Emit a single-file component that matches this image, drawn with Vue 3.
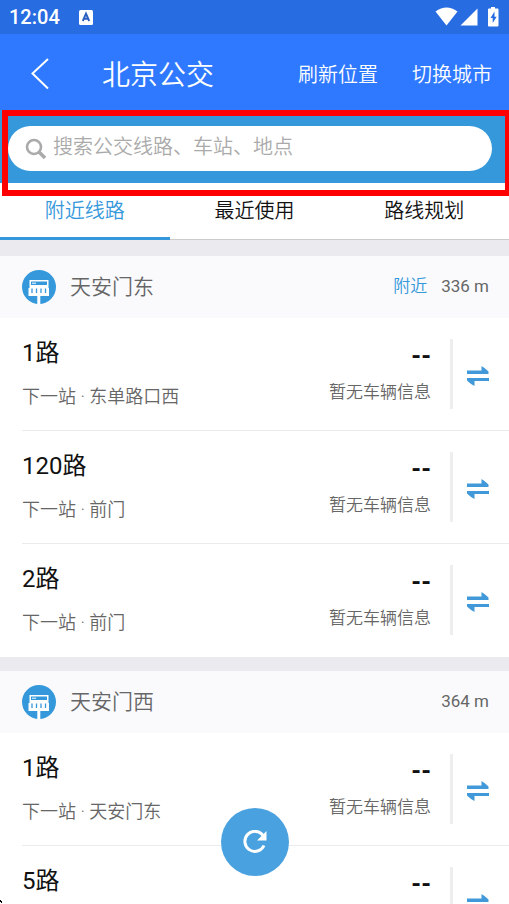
<script setup>
import { ref } from 'vue'

const keyword = ref('')
const activeTab = ref('附近线路')
const tabs = ['附近线路', '最近使用', '路线规划']

const stations = [
  {
    name: '天安门东',
    nearest: true,
    distance: '336 m',
    routes: [
      { name: '1路', next: '东单路口西' },
      { name: '120路', next: '前门' },
      { name: '2路', next: '前门' },
    ],
  },
  {
    name: '天安门西',
    nearest: false,
    distance: '364 m',
    routes: [
      { name: '1路', next: '天安门东' },
      { name: '5路', next: '前门' },
    ],
  },
]
</script>

<template>
  <div class="app">
    <div class="status">
      <span class="clock">12:04</span>
      <svg class="ime" viewBox="0 0 14 15" aria-hidden="true">
        <rect width="14" height="15" rx="1.5" fill="#fff" />
        <path d="M3.8 11 7 3.6 10.2 11M5 8.7h4" fill="none" stroke="#285fc0" stroke-width="1.9" />
      </svg>
      <svg class="signals" viewBox="0 0 66 20" aria-hidden="true">
        <g fill="#fff">
          <path d="M.5 4.5Q11.500-3.500 22.500 4.500L11.500 18.500Z" />
          <path d="M42.500 1.500V18.500H25.500Z" />
          <path d="M56 0h4v1.500h2.500q1 0 1 1V18.500q0 1-1 1H54q-1 0-1-1V2.500q0-1 1-1h2Z" />
        </g>
        <path d="M59.500 4.500 55.500 11h2.200V16l4-6.300h-2.200Z" fill="#286ce2" />
      </svg>
    </div>

    <header class="header">
      <button class="back" type="button" aria-label="返回">
        <svg viewBox="0 0 18 32" aria-hidden="true">
          <path d="M17 1 1.500 15.500 17 30.500" fill="none" stroke="#fff" stroke-width="2" />
        </svg>
      </button>
      <h1>北京公交</h1>
      <button class="action" type="button">刷新位置</button>
      <button class="action" type="button">切换城市</button>
    </header>

    <div class="search">
      <label class="field">
        <svg viewBox="0 0 22 22" aria-hidden="true">
          <circle cx="9" cy="9" r="7" fill="none" stroke="#aaa" stroke-width="2.600" />
          <path d="M14 14 20 20" stroke="#aaa" stroke-width="3.600" />
        </svg>
        <input v-model="keyword" type="text" aria-label="搜索" placeholder="搜索公交线路、车站、地点" />
      </label>
      <div class="frame"></div>
    </div>

    <nav class="tabs">
      <button
        v-for="tab in tabs"
        :key="tab"
        type="button"
        :class="{ active: tab === activeTab }"
        @click="activeTab = tab"
      >{{ tab }}</button>
    </nav>

    <main class="list">
      <section v-for="station in stations" :key="station.name" class="station">
        <div class="station-head">
          <svg class="stop" viewBox="0 0 34 34" aria-hidden="true">
            <circle cx="17" cy="17" r="17" fill="#3498db" />
            <path d="M7.500 10h19V18h.5v8H18.300V34h-3V26H6.500V18h1Z" fill="#fff" />
            <rect x="9" y="11.500" width="16" height="3.500" fill="#3498db" />
            <path d="M10 13.200h4" stroke="#fff" stroke-width="1" />
            <path d="M10 18.500v4.500M14.500 18.500v4.500M19 18.500v4.500M23.500 18.500v4.500" stroke="#3498db" stroke-width="1.300" />
          </svg>
          <h2>{{ station.name }}</h2>
          <span v-if="station.nearest" class="near">附近</span>
          <span class="distance">{{ station.distance }}</span>
        </div>
        <ul>
          <li v-for="route in station.routes" :key="route.name">
            <div class="route">
              <h3>{{ route.name }}</h3>
              <p>下一站 · {{ route.next }}</p>
            </div>
            <div class="info">
              <strong>--</strong>
              <p>暂无车辆信息</p>
            </div>
            <button class="swap" type="button" aria-label="切换方向">
              <svg viewBox="0 0 24 22" aria-hidden="true">
                <path d="M1 5.500h14.500V1q3.500 2 7 5.500v2.500H1ZM23 13v3H8.500V21q-4-2-7.500-5.500V13Z" fill="#4299da" />
              </svg>
            </button>
          </li>
        </ul>
      </section>
    </main>

    <button class="refresh" type="button" aria-label="刷新">
      <svg viewBox="0 0 24 24" aria-hidden="true">
        <path d="M20 5.500A10 10 0 1 0 21 15.500" fill="none" stroke="#fff" stroke-width="3" />
        <path d="M23.500 1v9.500H14Z" fill="#fff" />
      </svg>
    </button>
    <svg class="speck" viewBox="0 0 3 5" aria-hidden="true">
      <path d="M0 1h1v1h1v2H1V3H0Z" fill="#000" />
    </svg>
  </div>
</template>

<style>
body {
  margin: 0;
}
</style>

<style scoped>
.app {
  position: relative;
  display: flex;
  flex-direction: column;
  height: 100vh;
  overflow: hidden;
  background: #fff;
  color: #111;
  font-family: Roboto, "Noto Sans CJK SC", sans-serif;
}
h1, h2, h3, p, ul {
  margin: 0;
  padding: 0;
  font-weight: 350;
}
button {
  margin: 0;
  padding: 0;
  border: 0;
  background: none;
  color: inherit;
  font: inherit;
}
svg {
  display: block;
  flex: none;
}
.status {
  display: flex;
  flex: none;
  align-items: center;
  height: 34px;
  padding: 0 8px 0 9px;
  background: #286ce2;
  color: #fff;
}
.clock {
  font-size: 20px;
  font-weight: 500;
  line-height: 34px;
}
.ime {
  width: 14px;
  height: 15px;
  margin-left: 19px;
}
.signals {
  width: 66px;
  height: 20px;
  margin-left: auto;
}
.header {
  display: flex;
  box-sizing: border-box;
  flex: none;
  align-items: center;
  height: 76px;
  padding: 4px 17px 0 31px;
  background: #2e79ff;
  color: #fff;
}
.back svg {
  width: 18px;
  height: 32px;
}
.header h1 {
  flex: 1;
  padding-top: 4px;
  margin-left: 53px;
  font-size: 28px;
  line-height: 42px;
}
.action {
  padding-top: 2px;
  margin-left: 34px;
  font-size: 20px;
  font-weight: 350;
  line-height: 42px;
}
.search {
  position: relative;
  flex: none;
  padding: 16px 17px 12px 8px;
  background: #3498db;
}
.frame {
  position: absolute;
  z-index: 1;
  top: 0;
  right: -2px;
  left: 2px;
  height: 74px;
  border: 6px solid #fe0000;
  pointer-events: none;
}
.field {
  display: flex;
  align-items: center;
  height: 45px;
  padding: 0 17px;
  gap: 6px;
  border-radius: 23px;
  background: #fff;
}
.field svg {
  width: 22px;
  height: 22px;
}
.field input {
  flex: 1;
  min-width: 0;
  height: 40px;
  padding: 0 0 4px;
  border: 0;
  outline: 0;
  background: none;
  font: 350 20px/36px Roboto, "Noto Sans CJK SC", sans-serif;
}
.field input::placeholder {
  color: #aaa;
  opacity: 1;
}
.tabs {
  display: grid;
  flex: none;
  grid-template-columns: repeat(3, 1fr);
  height: 57px;
  box-shadow: inset 0 -1px #ccc;
}
.tabs button {
  padding-top: 2px;
  border-bottom: 3px solid transparent;
  font-size: 20px;
  font-weight: 350;
  line-height: 52px;
}
.tabs .active {
  border-color: #3498db;
  color: #3498db;
}
.list {
  flex: 1;
  min-height: 0;
  overflow-y: auto;
  scrollbar-width: none;
  border-top: 2px solid #eaeaef;
}
.station {
  border-top: 14px solid #eaeaef;
}
.station-head {
  display: flex;
  align-items: center;
  height: 62px;
  padding: 0 20px 0 22px;
  background: #fafafd;
  color: #666;
}
.stop {
  width: 34px;
  height: 34px;
}
.station-head h2 {
  flex: 1;
  margin-left: 14px;
  font-size: 21px;
  line-height: 30px;
}
.near,
.distance {
  margin-left: 14px;
  padding-bottom: 2px;
  font-size: 17px;
  line-height: 30px;
}
.near {
  color: #3498db;
  font-weight: 350;
}
li {
  display: flex;
  align-items: center;
  height: 112px;
  margin-left: 22px;
  border-bottom: 1px solid #ebebeb;
}
li:last-child {
  border-color: transparent;
}
.route {
  flex: 1;
  padding-top: 2px;
}
.route h3 {
  font-size: 24px;
  font-weight: 400;
  line-height: 44px;
}
.route p {
  color: #666;
  font-size: 18px;
  line-height: 44px;
}
.info {
  text-align: right;
}
.info strong {
  display: block;
  font-size: 25px;
  font-weight: 700;
  line-height: 36px;
}
.info p {
  color: #666;
  font-size: 17px;
  line-height: 34px;
}
.swap {
  display: flex;
  box-sizing: border-box;
  align-items: center;
  height: 70px;
  margin-left: 19px;
  padding: 4px 19px 0 13px;
  border-left: 3px solid #eee;
}
.swap svg {
  width: 24px;
  height: 22px;
}
.refresh {
  position: absolute;
  bottom: 28px;
  left: calc(50% - 34px);
  display: grid;
  place-items: center;
  width: 68px;
  height: 68px;
  border-radius: 50%;
  background: #4aa1df;
}
.refresh svg {
  width: 24px;
  height: 24px;
}
.speck {
  position: absolute;
  bottom: 0;
  left: 0;
  width: 3px;
  height: 5px;
}
</style>
